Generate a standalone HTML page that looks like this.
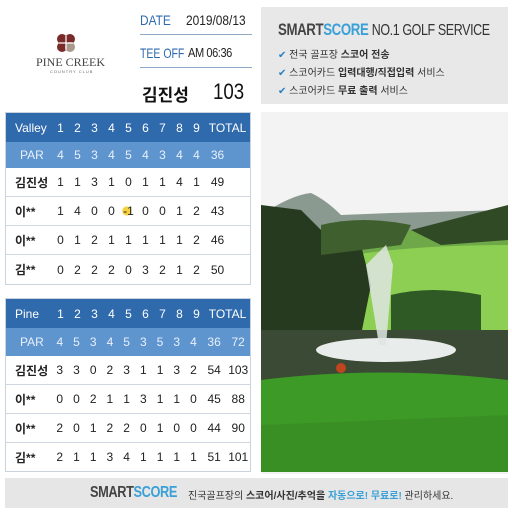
<!DOCTYPE html>
<html><head><meta charset="utf-8"><style>
*{margin:0;padding:0;box-sizing:border-box}
body{width:512px;height:512px;background:#fff;position:relative;overflow:hidden;font-family:"Liberation Sans","Noto Sans CJK KR",sans-serif}
.a{position:absolute;white-space:nowrap}
.s{transform:scaleX(0.85);transform-origin:left center}
.tb{position:absolute;left:5px;width:246px;border:1px solid #c8d3de}
.r{display:flex;align-items:center;font-size:12px;color:#222;border-bottom:1px solid #cfd8e2;background:#fff}
.r span{text-align:center;display:inline-block}
.r .l{width:46px;text-align:left;padding-left:9px}
.r .n{width:17px}
.r .t{width:25px}
.r .u{width:24px}
.h{background:#2f6aad;color:#fff;border-bottom:none}
.p{background:#5f95cf;color:#e8f0fa;border-bottom:none}
.ch{color:#2a7fc0;font-size:10px}
</style></head><body>
<svg class="a" style="left:56px;top:33px" width="20" height="20" viewBox="0 0 20 20">
<circle cx="6" cy="6" r="5" fill="#7a2a28"/><circle cx="14" cy="6" r="5" fill="#7a2a28"/><circle cx="6" cy="14" r="5" fill="#7a2a28"/><circle cx="14" cy="14" r="5" fill="#a8998c"/><path d="M10 3v14M3 10h14" stroke="#fff" stroke-width="1.2"/></svg>
<div class="a" style="left:36px;top:55px;font-family:'Liberation Serif',serif;font-size:12px;color:#444">PINE CREEK</div>
<div class="a" style="left:50px;top:69px;font-size:4px;color:#666;letter-spacing:1px">COUNTRY CLUB</div>
<div class="a s" style="left:140px;top:12px;font-size:14px;color:#2f6aad">DATE</div>
<div class="a s" style="left:186px;top:12px;font-size:14px;color:#222">2019/08/13</div>
<div class="a" style="left:140px;top:34px;width:112px;border-top:1px solid #8fa9c4"></div>
<div class="a s" style="left:140px;top:45px;font-size:14px;color:#2f6aad;transform:scaleX(0.75)">TEE OFF</div>
<div class="a s" style="left:188px;top:45px;font-size:13px;color:#222;letter-spacing:-0.5px">AM 06:36</div>
<div class="a" style="left:140px;top:67px;width:112px;border-top:1px solid #8fa9c4"></div>
<div class="a" style="left:142px;top:81px;font-size:17px;color:#111;font-weight:bold">김진성</div>
<div class="a s" style="left:213px;top:79px;font-size:22px;color:#111">103</div>

<div class="tb" style="top:112px">
<div class="r h" style="height:29px"><span class="l">Valley</span><span class="n">1</span><span class="n">2</span><span class="n">3</span><span class="n">4</span><span class="n">5</span><span class="n">6</span><span class="n">7</span><span class="n">8</span><span class="n">9</span><span class="t" style="width:45px">TOTAL</span></div>
<div class="r p" style="height:26px"><span class="l" style="padding-left:14px">PAR</span><span class="n">4</span><span class="n">5</span><span class="n">3</span><span class="n">4</span><span class="n">5</span><span class="n">4</span><span class="n">3</span><span class="n">4</span><span class="n">4</span><span class="t">36</span></div>
<div class="r" style="height:29px"><span class="l"><b>김진성</b></span><span class="n">1</span><span class="n">1</span><span class="n">3</span><span class="n">1</span><span class="n">0</span><span class="n">1</span><span class="n">1</span><span class="n">4</span><span class="n">1</span><span class="t">49</span></div>
<div class="r" style="height:29px"><span class="l"><b>이**</b></span><span class="n">1</span><span class="n">4</span><span class="n">0</span><span class="n">0</span><span class="n" style="background:radial-gradient(circle at 40% 50%,#f5d040 0 4px,transparent 5px)">-1</span><span class="n">0</span><span class="n">0</span><span class="n">1</span><span class="n">2</span><span class="t">43</span></div>
<div class="r" style="height:29px"><span class="l"><b>이**</b></span><span class="n">0</span><span class="n">1</span><span class="n">2</span><span class="n">1</span><span class="n">1</span><span class="n">1</span><span class="n">1</span><span class="n">1</span><span class="n">2</span><span class="t">46</span></div>
<div class="r" style="height:29px;border-bottom:none"><span class="l"><b>김**</b></span><span class="n">0</span><span class="n">2</span><span class="n">2</span><span class="n">2</span><span class="n">0</span><span class="n">3</span><span class="n">2</span><span class="n">1</span><span class="n">2</span><span class="t">50</span></div>
</div>

<div class="tb" style="top:298px">
<div class="r h" style="height:29px"><span class="l">Pine</span><span class="n">1</span><span class="n">2</span><span class="n">3</span><span class="n">4</span><span class="n">5</span><span class="n">6</span><span class="n">7</span><span class="n">8</span><span class="n">9</span><span class="t" style="width:45px">TOTAL</span></div>
<div class="r p" style="height:28px"><span class="l" style="padding-left:14px">PAR</span><span class="n">4</span><span class="n">5</span><span class="n">3</span><span class="n">4</span><span class="n">5</span><span class="n">3</span><span class="n">5</span><span class="n">3</span><span class="n">4</span><span class="t">36</span><span class="u">72</span></div>
<div class="r" style="height:29px"><span class="l"><b>김진성</b></span><span class="n">3</span><span class="n">3</span><span class="n">0</span><span class="n">2</span><span class="n">3</span><span class="n">1</span><span class="n">1</span><span class="n">3</span><span class="n">2</span><span class="t">54</span><span class="u">103</span></div>
<div class="r" style="height:29px"><span class="l"><b>이**</b></span><span class="n">0</span><span class="n">0</span><span class="n">2</span><span class="n">1</span><span class="n">1</span><span class="n">3</span><span class="n">1</span><span class="n">1</span><span class="n">0</span><span class="t">45</span><span class="u">88</span></div>
<div class="r" style="height:29px"><span class="l"><b>이**</b></span><span class="n">2</span><span class="n">0</span><span class="n">1</span><span class="n">2</span><span class="n">2</span><span class="n">0</span><span class="n">1</span><span class="n">0</span><span class="n">0</span><span class="t">44</span><span class="u">90</span></div>
<div class="r" style="height:28px;border-bottom:none"><span class="l"><b>김**</b></span><span class="n">2</span><span class="n">1</span><span class="n">1</span><span class="n">3</span><span class="n">4</span><span class="n">1</span><span class="n">1</span><span class="n">1</span><span class="n">1</span><span class="t">51</span><span class="u">101</span></div>
</div>

<div class="a" style="left:261px;top:7px;width:247px;height:97px;background:#e8e8e8"></div>
<div class="a s" style="left:278px;top:20px;font-size:17px;font-weight:bold;letter-spacing:-0.5px;color:#444;transform:scaleX(0.78)">SMART<span style="color:#3aa0d8">SCORE</span> <span style="font-weight:normal;color:#333;font-size:16px">NO.1 GOLF SERVICE</span></div>
<div class="a" style="left:278px;top:46px;font-size:10px;color:#333"><span class="ch">✔</span> 전국 골프장 <b>스코어 전송</b></div>
<div class="a" style="left:278px;top:64px;font-size:10px;color:#333"><span class="ch">✔</span> 스코어카드 <b>입력대행/직접입력</b> 서비스</div>
<div class="a" style="left:278px;top:82px;font-size:10px;color:#333"><span class="ch">✔</span> 스코어카드 <b>무료 출력</b> 서비스</div>
<div class="a" style="left:261px;top:112px;width:247px;height:362px;background:#f3f3f3"></div>
<svg class="a" style="left:261px;top:185px" width="247" height="287" viewBox="0 0 247 287">
<rect width="247" height="287" fill="#f2f3f2"/>
<path d="M0 30 Q30 10 50 8 Q65 15 80 30 L130 28 L247 25 L247 80 L0 80Z" fill="#8b9a90"/>
<rect x="0" y="45" width="247" height="110" fill="#6ea849"/>
<path d="M40 80 Q120 60 247 60 L247 150 L40 150Z" fill="#8ccf52"/>
<path d="M0 20 L40 25 L60 45 L100 60 L110 100 L100 150 L0 150Z" fill="#263a1f"/>
<path d="M150 45 L247 20 L247 55 L180 60Z" fill="#2f4a25"/>
<path d="M60 40 Q100 30 150 40 L140 60 L60 70Z" fill="#3f5f2e"/>
<path d="M130 110 Q170 100 220 110 L220 150 L130 150Z" fill="#2f5a25"/>
<rect x="0" y="145" width="247" height="50" fill="#3a4a35"/>
<ellipse cx="125" cy="165" rx="70" ry="12" fill="#e8eceb"/>
<path d="M118 160 L105 80 L125 60 L132 80 L125 160Z" fill="#dfe5e3" opacity="0.85"/>
<path d="M0 195 Q120 180 247 195 L247 287 L0 287Z" fill="#3d9a26"/>
<path d="M0 240 L247 230 L247 287 L0 287Z" fill="#3a8f24"/>
<circle cx="80" cy="183" r="5" fill="#c0451f"/>
</svg>
<div class="a" style="left:5px;top:478px;width:503px;height:30px;background:#e6e6e6"></div>
<div class="a s" style="left:90px;top:484px;font-size:16px;font-weight:bold;letter-spacing:-0.5px;color:#444;transform:scaleX(0.8)">SMART<span style="color:#3aa0d8">SCORE</span></div>
<div class="a" style="left:188px;top:487px;font-size:10px;color:#333">진국골프장의 <b>스코어/사진/추억을</b> <b style="color:#3aa0d8">자동으로! 무료로!</b> 관리하세요.</div>
</body></html>
